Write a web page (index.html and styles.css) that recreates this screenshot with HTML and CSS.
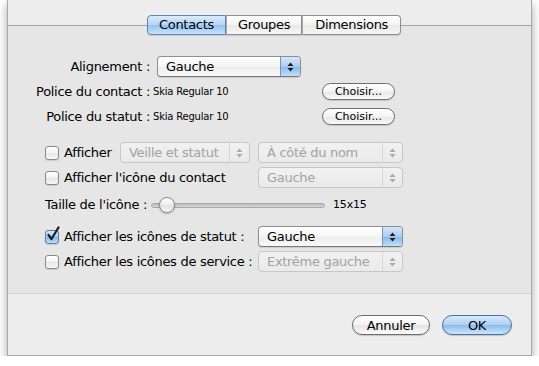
FILE: index.html
```html
<!DOCTYPE html>
<html lang="fr">
<head>
  <meta charset="UTF-8" />
  <title>Préférences | Contacts</title>
  <link rel="stylesheet" href="styles.css">
</head>
<body>
<div class="window">
  <div class="tabview">
    <div class="tabs">
      <span class="tab selected">Contacts</span>
      <span class="tab">Groupes</span>
      <span class="tab">Dimensions</span>
    </div>

    <div class="pane">
      <div class="form-row align-row">
        <span class="lbl">Alignement :</span>
        <div class="popup popup-align">
          <span class="popup-text">Gauche</span>
          <span class="popup-arrows"><svg width="7" height="10" viewBox="0 0 7 10"><path d="M3.5 0.5 L6.5 4 H0.5Z M0.5 6 H6.5 L3.5 9.5Z"/></svg></span>
        </div>
      </div>

      <div class="form-row font-row first">
        <span class="lbl">Police du contact :</span>
        <span class="font-name">Skia Regular 10</span>
        <button class="small-btn">Choisir...</button>
      </div>
      <div class="form-row font-row">
        <span class="lbl">Police du statut :</span>
        <span class="font-name">Skia Regular 10</span>
        <button class="small-btn">Choisir...</button>
      </div>

      <div class="opt-row row-show">
        <div class="check-cell">
          <span class="check"></span>
          <span>Afficher</span>
          <div class="popup off popup-mode">
            <span class="popup-text">Veille et statut</span>
            <span class="popup-arrows"><svg width="7" height="10" viewBox="0 0 7 10"><path d="M3.5 0.5 L6.5 4 H0.5Z M0.5 6 H6.5 L3.5 9.5Z"/></svg></span>
          </div>
        </div>
        <div class="popup off">
          <span class="popup-text">À côté du nom</span>
          <span class="popup-arrows"><svg width="7" height="10" viewBox="0 0 7 10"><path d="M3.5 0.5 L6.5 4 H0.5Z M0.5 6 H6.5 L3.5 9.5Z"/></svg></span>
        </div>
      </div>

      <div class="opt-row row-icon">
        <div class="check-cell">
          <span class="check"></span>
          <span>Afficher l'icône du contact</span>
        </div>
        <div class="popup off">
          <span class="popup-text">Gauche</span>
          <span class="popup-arrows"><svg width="7" height="10" viewBox="0 0 7 10"><path d="M3.5 0.5 L6.5 4 H0.5Z M0.5 6 H6.5 L3.5 9.5Z"/></svg></span>
        </div>
      </div>

      <div class="slider-row">
        <span>Taille de l'icône :</span>
        <div class="slider">
          <span class="track"></span>
          <span class="knob"></span>
        </div>
        <span class="slider-value">15x15</span>
      </div>

      <div class="opt-row row-status">
        <div class="check-cell">
          <span class="check on"><svg width="14" height="16" viewBox="0 0 14 16"><path d="M2.5 9 L5.5 13 L12.5 1.5" fill="none" stroke="#1c1c1c" stroke-width="2.2" stroke-linecap="round" stroke-linejoin="round"/></svg></span>
          <span>Afficher les icônes de statut :</span>
        </div>
        <div class="popup">
          <span class="popup-text">Gauche</span>
          <span class="popup-arrows"><svg width="7" height="10" viewBox="0 0 7 10"><path d="M3.5 0.5 L6.5 4 H0.5Z M0.5 6 H6.5 L3.5 9.5Z"/></svg></span>
        </div>
      </div>

      <div class="opt-row row-service">
        <div class="check-cell">
          <span class="check"></span>
          <span>Afficher les icônes de service :</span>
        </div>
        <div class="popup off">
          <span class="popup-text">Extrême gauche</span>
          <span class="popup-arrows"><svg width="7" height="10" viewBox="0 0 7 10"><path d="M3.5 0.5 L6.5 4 H0.5Z M0.5 6 H6.5 L3.5 9.5Z"/></svg></span>
        </div>
      </div>
    </div>
  </div>

  <div class="actions">
    <button class="push">Annuler</button>
    <button class="push default">OK</button>
  </div>
</div>
</body>
</html>
```

FILE: styles.css
```css
body {
  margin: 0;
  background: #fff;
  font-family: "DejaVu Sans", "Liberation Sans", sans-serif;
  font-size: 13px;
  letter-spacing: -0.3px;
  line-height: 16px;
  color: #000;
}

.window {
  margin-left: 7px;
  width: 523px;
  height: 355px;
  background: #ededed;
  border: 1px solid #a8a8a8;
  border-top: none;
  box-shadow: 0 4px 9px rgba(0, 0, 0, 0.35);
  display: flex;
  flex-direction: column;
}

/* tab view */
.tabview {
  margin-top: 25px;
  height: 267px;
  background: #e6e6e6;
  border-top: 1px solid #a4a4a4;
  border-bottom: 1px solid #d3d3d3;
}

.tabs {
  display: flex;
  margin: -11px 0 0 139px;
}

.tab {
  height: 18px;
  line-height: 18px;
  padding: 0 11px;
  border: 1px solid #8e8e8e;
  border-left: 1px solid #a9a9a9;
  background: linear-gradient(#ffffff, #f3f3f3 50%, #e8e8e8 51%, #f6f6f6);
  box-shadow: 0 1px 1px rgba(0, 0, 0, 0.12);
}

.tab:first-child {
  border-left-color: #8e8e8e;
  border-radius: 4px 0 0 4px;
}

.tab:last-child {
  border-radius: 0 4px 4px 0;
  padding: 0 12px;
}

.tab.selected {
  background: linear-gradient(#dcebfb, #b5d4f4 50%, #97c2ee 51%, #c4e2fc);
  border-color: #6483b3;
}

.pane {
  display: flex;
  flex-direction: column;
}

/* label / value rows */
.form-row {
  display: grid;
  grid-template-columns: 142px 172px auto;
  align-items: center;
}

.lbl {
  text-align: right;
}

.align-row {
  margin-top: 21px;
}

.font-row {
  margin-top: 8px;
}

.font-row.first {
  margin-top: 6px;
}

.font-name {
  margin-left: 3px;
  font-size: 10px;
  letter-spacing: -0.2px;
}

.small-btn {
  width: 73px;
  height: 17px;
  padding: 0;
  font-family: inherit;
  font-size: 11px;
  letter-spacing: 0;
  color: #000;
  border: 1px solid #6f6f6f;
  border-radius: 9px;
  background: linear-gradient(#ffffff, #f4f4f4 50%, #e6e6e6 51%, #fafafa);
  box-shadow: 0 1px 1px rgba(0, 0, 0, 0.15);
}

/* popup buttons */
.popup {
  display: flex;
  height: 19px;
  border: 1px solid #8f8f8f;
  border-bottom-color: #777;
  border-radius: 4px;
  background: linear-gradient(#ffffff, #f5f5f5 50%, #ececec 51%, #f8f8f8);
  box-shadow: 0 1px 1px rgba(0, 0, 0, 0.12);
}

.popup-align {
  width: 142px;
  margin-left: 7px;
}

.popup-text {
  flex: 1;
  padding-left: 8px;
  line-height: 19px;
  white-space: nowrap;
}

.popup-arrows {
  width: 19px;
  display: flex;
  align-items: center;
  justify-content: center;
  border-left: 1px solid #7c93b8;
  border-radius: 0 3px 3px 0;
  background: linear-gradient(#d4e6fa, #a9cdf2 50%, #86b7ea 51%, #bfe0fb);
}

.popup-arrows svg {
  fill: #1e1e1e;
}

.popup.off {
  color: #a2a2a2;
  border-color: #c7c7c7;
  background: linear-gradient(#f1f1f1, #eaeaea);
  box-shadow: none;
}

.popup.off .popup-arrows {
  background: none;
  border-left-color: #d6d6d6;
}

.popup.off .popup-arrows svg {
  fill: #a8a8a8;
}

/* checkbox rows */
.opt-row {
  display: grid;
  grid-template-columns: 213px 145px;
  align-items: center;
  padding-left: 37px;
  margin-top: 4px;
}

.row-show {
  margin-top: 17px;
}

.row-status {
  margin-top: 13px;
}

.check-cell {
  display: flex;
  align-items: center;
  gap: 5px;
  white-space: nowrap;
}

.popup-mode {
  width: 128px;
  margin: 0 8px 0 auto;
}

.check {
  position: relative;
  width: 12px;
  height: 12px;
  flex: none;
  border: 1px solid #8a8a8a;
  border-radius: 3px;
  background: linear-gradient(#ffffff, #f1f1f1 50%, #e5e5e5 51%, #f7f7f7);
  box-shadow: 0 1px 1px rgba(0, 0, 0, 0.12);
}

.check.on {
  border-color: #5f7ea9;
  background: linear-gradient(#d4e6fa, #a9cdf2 50%, #86b7ea 51%, #bfe0fb);
}

.check.on svg {
  position: absolute;
  left: 0;
  top: -5px;
}

/* slider */
.slider-row {
  display: flex;
  align-items: center;
  padding-left: 37px;
  margin-top: 9px;
}

.slider {
  position: relative;
  width: 174px;
  height: 16px;
  margin-left: 4px;
}

.track {
  position: absolute;
  left: 0;
  right: 0;
  top: 6px;
  height: 3px;
  border: 1px solid #a9a9a9;
  border-radius: 3px;
  background: linear-gradient(#b9b9b9, #d8d8d8);
}

.knob {
  position: absolute;
  left: 8px;
  top: 0;
  width: 14px;
  height: 14px;
  border: 1px solid #8b8b8b;
  border-radius: 50%;
  background: linear-gradient(#ffffff, #ececec 50%, #e0e0e0 51%, #fafafa);
  box-shadow: 0 1px 2px rgba(0, 0, 0, 0.25);
}

.slider-value {
  margin-left: 8px;
  font-size: 11px;
  letter-spacing: -0.2px;
}

/* bottom buttons */
.actions {
  display: flex;
  justify-content: flex-end;
  gap: 12px;
  padding: 21px 19px 0 0;
}

.push {
  height: 20px;
  width: 78px;
  padding: 0;
  font-family: inherit;
  font-size: 13px;
  letter-spacing: -0.3px;
  color: #000;
  border: 1px solid #6c6c6c;
  border-radius: 10px;
  background: linear-gradient(#ffffff, #f3f3f3 50%, #e4e4e4 51%, #fbfbfb);
  box-shadow: 0 1px 1px rgba(0, 0, 0, 0.18);
}

.push.default {
  width: 70px;
  border-color: #4f6f9f;
  background: linear-gradient(#d7e8fb, #aed0f3 50%, #8cbbec 51%, #c8e5fd);
}
```
